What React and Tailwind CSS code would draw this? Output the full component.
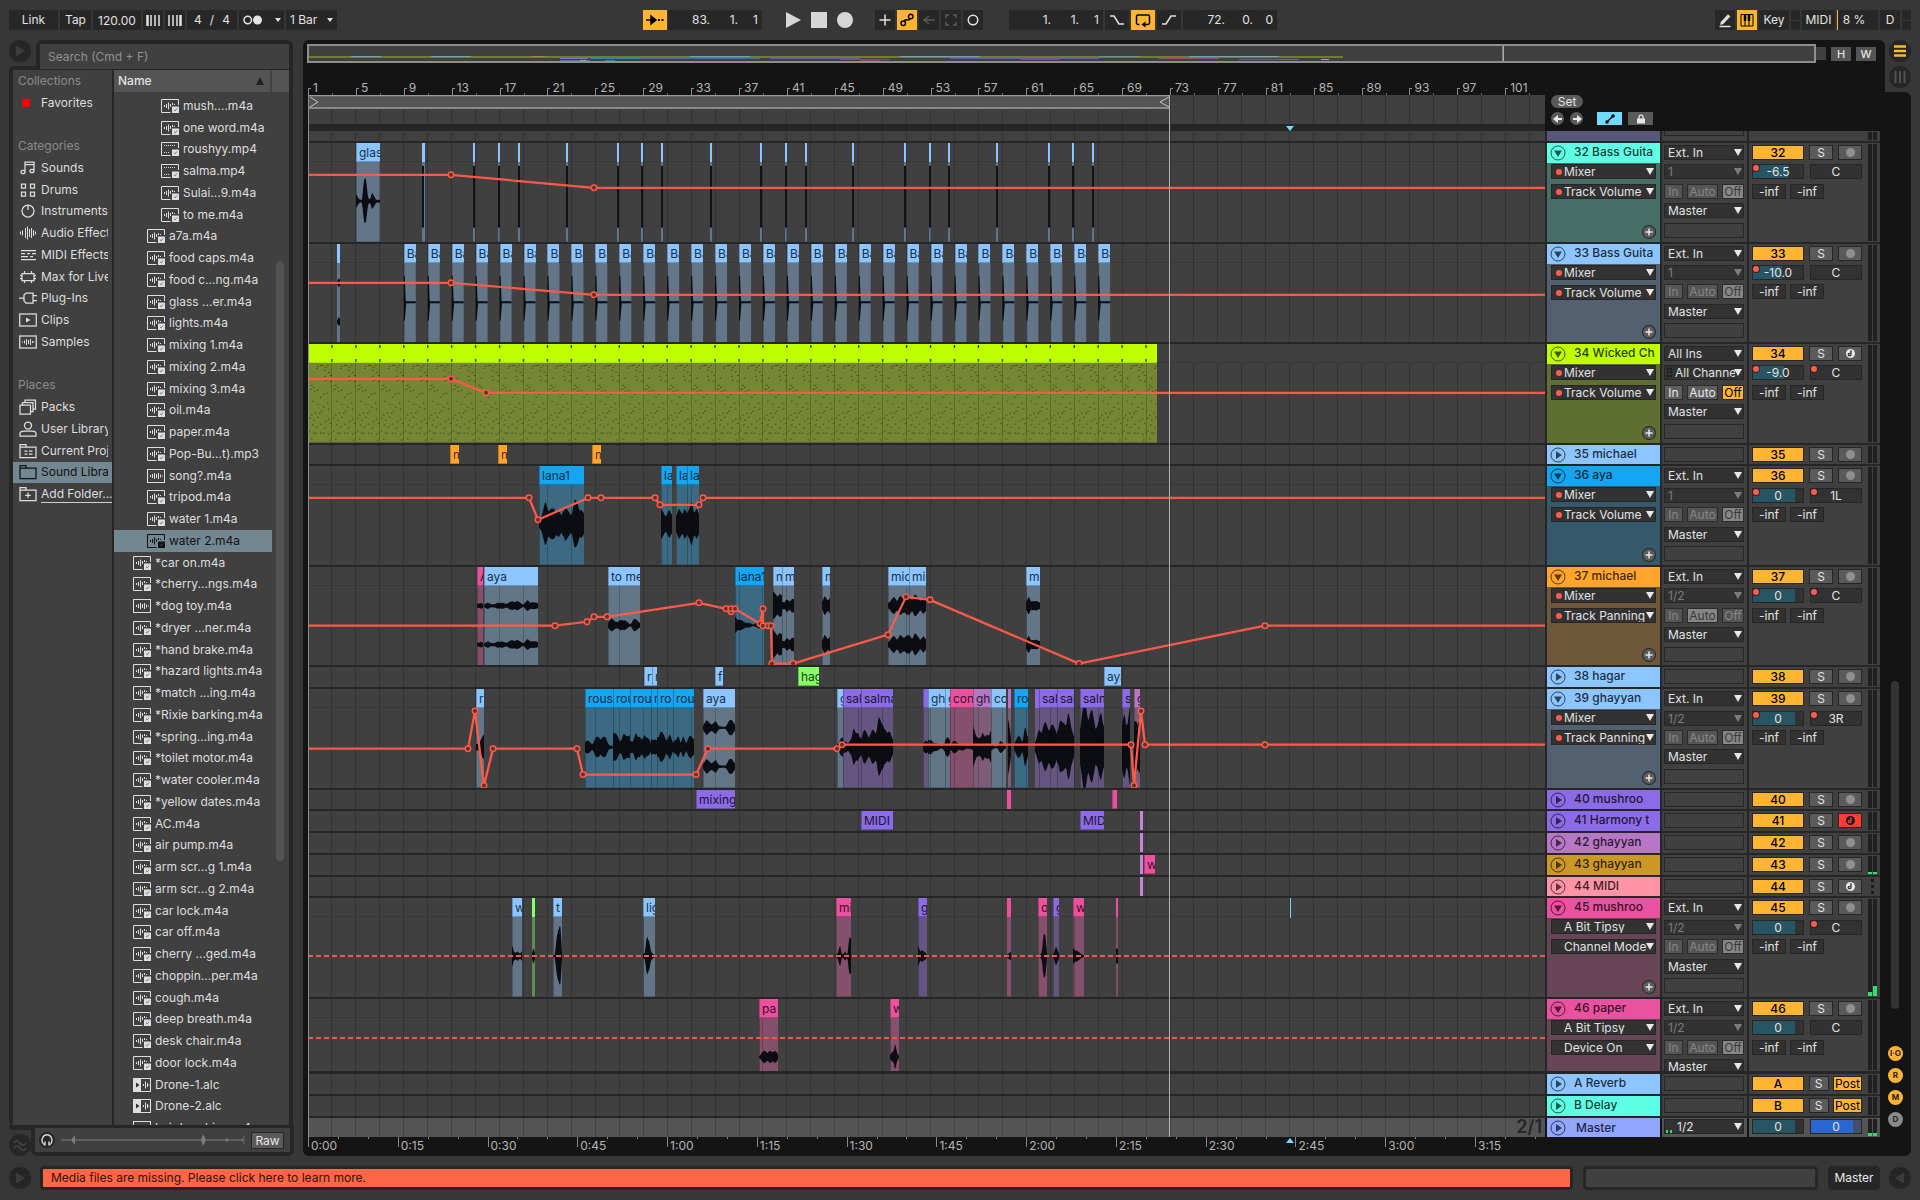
import React from "react";

/* ---------- timeline geometry ---------- */
const X0 = 308;
const W = 1237;
const BAR = 862 / 72;
const pct = (x) => `${((x - X0) / W) * 100}%`;
const pctW = (w) => `${(w / W) * 100}%`;
const barX = (bar) => X0 + (bar - 1) * BAR;

const TONES = {
  sky: { head: "bg-[#8cc5ff]", body: "#637688", ink: "text-[#16324a]" },
  blue: { head: "bg-[#14a5f3]", body: "#3c6a82", ink: "text-[#062c44]" },
  pink: { head: "bg-[#ea52a0]", body: "#84506b", ink: "text-[#3c0d26]" },
  purple: { head: "bg-[#8b6ce6]", body: "#645680", ink: "text-[#1c1238]" },
  violet: { head: "bg-[#b677c6]", body: "#7d5c78", ink: "text-[#311636]" },
  plum: { head: "bg-[#c784dc]", body: "#7d5c78", ink: "text-[#311636]" },
  green: { head: "bg-[#87ff67]", body: "#5e8c52", ink: "text-[#173f0c]" },
  orange: { head: "bg-[#ffa52c]", body: "#86683a", ink: "text-[#4a2c00]" },
};

const thin32 = [422, 473, 498, 518, 566, 617, 641, 661, 710, 760, 785, 805, 852, 904, 929, 948, 996, 1048, 1072, 1092];

const clip = (tone, x0, x1, name = "", waves = []) => ({ tone, x0, x1, name, waves });
const mono = (...a) => [{ cy: 58.5, a }];
const dual = (...a) => [{ cy: 39, a }, { cy: 78, a }];
const marks = (...points) => points;

const clips32 = [
  clip("sky", 356, 380, "glass", mono(7, 3, 1.5, 2, 21, 20, 4, 2, 8, 5, 2, 1.5, 1.5)),
  ...thin32.map((x, i) => ({ ...clip("sky", x, x + (i === 0 ? 3 : 2)), sliver: true })),
];
const clips33 = [
  clip("sky", 337, 340, "", [{ cy: 39, a: [2, 5, 3] }, { cy: 78, a: [2, 5, 3] }]),
  ...Array.from({ length: 30 }, (_, i) => ({
    ...clip("sky", barX(9 + i * 2), barX(9 + i * 2) + 12, "Ba"),
    pluck: true,
  })),
];

const TRACKS = [
  {
    n: "32", title: "32 Bass Guita", tall: true, head: "bg-[#5fffe6]", body: "bg-[#476f68]",
    sel: ["Mixer", "Track Volume"], dot: true, io: ["Ext. In", "1"], off: 2, vol: "-6.5", fill: 70, volDot: true, pan: "C",
    clips: clips32, auto: [[308, 32], [451, 32, 1], [594, 45, 1], [1545, 45]],
  },
  {
    n: "33", title: "33 Bass Guita", tall: true, head: "bg-[#8cc5ff]", body: "bg-[#53606f]",
    sel: ["Mixer", "Track Volume"], dot: true, io: ["Ext. In", "1"], off: 2, vol: "-10.0", fill: 58, volDot: true, pan: "C",
    clips: clips33, auto: [[308, 39], [451, 39, 1], [594, 51, 1], [1545, 51]],
  },
  {
    n: "34", title: "34 Wicked Ch", tall: true, head: "bg-[#c0ff00]", body: "bg-[#5f6e31]",
    sel: ["Mixer", "Track Volume"], dot: true, io: ["All Ins", "All Channels"], off: 2, live: true, midi: true, vol: "-9.0", fill: 62, volDot: true, pan: "C", panDot: true,
    clips: [], chords: true, auto: [[308, 35], [451, 35, 1], [486, 49, 1], [1545, 49]],
  },
  {
    n: "35", title: "35 michael", head: "bg-[#8cc5ff]",
    clips: [clip("orange", 450, 459, "m"), clip("orange", 498, 507, "m"), clip("orange", 592, 601, "m")],
  },
  {
    n: "36", title: "36 aya", tall: true, head: "bg-[#14a5f3]", body: "bg-[#35586a]",
    sel: ["Mixer", "Track Volume"], dot: true, io: ["Ext. In", "1"], off: 2, vol: "0", fill: 84, volDot: true, pan: "1L", panDot: true,
    clips: [
      clip("blue", 539, 584, "lana1", mono(4, 10, 21, 16, 14, 15, 13, 8, 20, 12, 10, 23, 20, 16, 9)),
      clip("blue", 661, 672, "lana", mono(14, 12, 9, 13, 10)),
      clip("blue", 676, 687, "lana", mono(8, 14, 12, 16, 10)),
      clip("blue", 687, 699, "lana", mono(12, 14, 22, 14, 15, 9)),
    ],
    auto: marks([308, 32], [529, 32, 1], [538, 54, 1], [588, 32, 1], [601, 32, 1], [655, 32, 1], [660, 39, 1], [699, 39, 1], [703, 32, 1], [1545, 32]),
  },
  {
    n: "37", title: "37 michael", tall: true, head: "bg-[#ffa52c]", body: "bg-[#6f583a]",
    sel: ["Mixer", "Track Panning"], dot: true, io: ["Ext. In", "1/2"], off: 1, vol: "0", fill: 84, volDot: true, pan: "C", panDot: true,
    clips: [
      clip("pink", 477, 483, "A", dual(2, 3, 2)),
      clip("sky", 484, 538, "aya", dual(1.5, 3, 2, 1.5, 3.5, 3, 2, 3.5, 4, 5, 3, 1.5, 5, 4, 3, 3)),
      clip("sky", 608, 640, "to me", mono(3, 6, 5, 3, 5, 6, 3, 1, 6, 5, 3)),
      clip("blue", 735, 764, "lana1", mono(8, 6, 4, 3, 2, 1, 2, 4, 3)),
      clip("sky", 773, 782, "m", dual(13, 11, 12, 9)),
      clip("sky", 782, 794, "mi", dual(5, 3, 6, 5, 7, 6)),
      clip("sky", 822, 830, "m", dual(4, 9, 6, 9)),
      clip("sky", 888, 909, "mich", dual(3, 6, 8, 6, 9, 7, 10, 8)),
      clip("sky", 909, 926, "mi", dual(9, 7, 11, 8, 6, 8, 5)),
      clip("sky", 1026, 1040, "mi", dual(3, 9, 5, 4, 5, 4)),
    ],
    auto: marks(
      [308, 59], [555, 59, 1], [587, 55, 1], [594, 50, 1], [607, 50, 1], [699, 36, 1], [726, 42, 1], [731, 45, 1], [731, 42, 1], [735, 42, 1],
      [760, 57, 1], [763, 42, 1], [763, 59, 1], [768, 59, 1], [771, 59, 1], [772, 97, 1], [793, 97, 1], [888, 68, 1], [906, 30, 1], [930, 33, 1], [1079, 97, 1], [1265, 59, 1], [1545, 59],
    ),
  },
  {
    n: "38", title: "38 hagar", head: "bg-[#8cc5ff]",
    clips: [clip("sky", 644, 652, "r"), clip("sky", 652, 657, "r"), clip("sky", 715, 723, "f"), clip("green", 798, 819, "hagar"), clip("sky", 1104, 1121, "aya")],
  },
  {
    n: "39", title: "39 ghayyan", tall: true, head: "bg-[#8cc5ff]", body: "bg-[#53606f]",
    sel: ["Mixer", "Track Panning"], dot: true, io: ["Ext. In", "1/2"], off: 2, vol: "0", fill: 84, volDot: true, pan: "3R", panDot: true,
    clips: [
      clip("sky", 476, 484, "r", mono(3, 4, 8, 12)),
      clip("blue", 585, 613, "rous", mono(7, 6, 3, 9, 10, 10, 9, 2, 1)),
      clip("blue", 613, 630, "rou", mono(18, 12, 6, 13, 10, 15)),
      clip("blue", 630, 651, "rou", mono(8, 5, 14, 12, 6, 14, 9, 4)),
      clip("blue", 651, 657, "r", mono(8, 9, 6)),
      clip("blue", 657, 673, "ro", mono(10, 16, 12, 8, 12, 4)),
      clip("blue", 673, 694, "rou", mono(4, 9, 11, 3, 14, 3, 9, 14, 7)),
      clip("sky", 703, 735, "aya", dual(3, 7, 5, 4, 6, 2, 1, 1, 7, 7, 4)),
      clip("sky", 837, 843, "g", mono(2, 8, 9)),
      clip("purple", 843, 861, "salm", mono(8, 6, 3, 8, 20, 12, 15, 10)),
      clip("purple", 861, 893, "salma", mono(9, 16, 14, 12, 16, 15, 30, 22, 24, 13, 15, 10)),
      clip("purple", 923, 928, "", mono(4, 6, 5)),
      clip("sky", 928, 945, "gha", mono(9, 7, 4, 5, 2, 1, 6)),
      clip("sky", 945, 950, "g", mono(9, 10, 6)),
      clip("pink", 950, 973, "cong", mono(3, 6, 5, 3, 3, 2, 1.5, 3)),
      clip("violet", 973, 991, "gha", mono(27, 10, 8, 16, 9, 14, 16)),
      clip("sky", 991, 1006, "con", mono(4, 1, 1, 6, 4, 1)),
      clip("violet", 1008, 1011, "", mono(30, 8)),
      clip("blue", 1014, 1028, "rou", mono(2, 8, 14, 4, 20, 12)),
      clip("purple", 1035, 1039, "", mono(6, 16)),
      clip("purple", 1039, 1057, "salm", mono(16, 19, 23, 20, 22, 19, 17)),
      clip("purple", 1057, 1074, "salm", mono(19, 26, 22, 26, 34, 18, 14)),
      clip("purple", 1080, 1104, "salma", mono(22, 38, 40, 32, 34, 24, 22, 33, 26)),
      clip("purple", 1122, 1130, "s", mono(20, 34, 24, 36)),
      clip("violet", 1134, 1140, "g", mono(22, 30, 26)),
    ],
    auto: marks(
      [308, 60], [468, 60, 1], [475, 22, 1], [484, 97, 1], [493, 60, 1], [577, 60, 1], [583, 86, 1], [696, 86, 1], [708, 60, 1], [837, 60, 1], [842, 56, 1],
      [1131, 56, 1], [1134, 97, 1], [1141, 22, 1], [1145, 56, 1], [1265, 56, 1], [1545, 56],
    ),
  },
  { n: "40", title: "40 mushroo", head: "bg-[#8b6ce6]", clips: [clip("purple", 696, 735, "mixing"), clip("pink", 1007, 1011), clip("pink", 1112, 1117)] },
  { n: "41", title: "41 Harmony t", head: "bg-[#8b6ce6]", midi: true, armed: true, clips: [clip("purple", 861, 893, "MIDI"), clip("purple", 1080, 1104, "MIDI"), clip("plum", 1140, 1143)] },
  { n: "42", title: "42 ghayyan", head: "bg-[#b677c6]", clips: [clip("plum", 1140, 1143)] },
  { n: "43", title: "43 ghayyan", head: "bg-[#cc9927]", level: [2, 2], clips: [clip("plum", 1140, 1143), clip("pink", 1144, 1155, "w")] },
  { n: "44", title: "44 MIDI", head: "bg-[#ff94a6]", midi: true, clips: [clip("plum", 1140, 1143)] },
  {
    n: "45", title: "45 mushroo", tall: true, head: "bg-[#ea52a0]", body: "bg-[#684556]",
    sel: ["A Bit Tipsy", "Channel Mode"], io: ["Ext. In", "1/2"], off: 2, vol: "0", fill: 84, pan: "C", panDot: true, level: [4, 10], dashed: 58, cursor: true,
    clips: [
      clip("sky", 512, 522, "w", mono(14, 4, 3, 5, 3, 5)),
      clip("green", 532, 535, "", mono(3, 8, 4)),
      clip("sky", 553, 562, "t", mono(1, 1, 18, 34, 32, 4)),
      clip("sky", 643, 655, "light", mono(2, 3, 21, 19, 4, 2, 1)),
      clip("pink", 836, 851, "mi", mono(1, 3, 14, 2, 2, 5, 1, 18, 16)),
      clip("purple", 918, 927, "g", mono(11, 4, 6, 5, 1)),
      clip("pink", 1007, 1011, "", mono(2, 4)),
      clip("pink", 1038, 1047, "o", mono(1, 1, 4, 22, 20, 3)),
      clip("purple", 1053, 1059, "g", mono(1, 9, 3)),
      clip("pink", 1073, 1084, "w", mono(8, 7, 4, 2, 1)),
      clip("pink", 1116, 1118, "", mono(7)),
    ],
  },
];

const TRACK46 = {
  n: "46", title: "46 paper", tall: true, last: true, head: "bg-[#ea52a0]", body: "bg-[#684556]",
  sel: ["A Bit Tipsy", "Device On"], io: ["Ext. In", "1/2"], off: 2, vol: "0", fill: 84, pan: "C", dashed: 39,
  clips: [
    clip("pink", 759, 778, "pa", [{ cy: 58, a: [1, 4, 6, 5, 6, 4, 8, 2] }]),
    clip("pink", 890, 899, "w", [{ cy: 58, a: [2, 4, 5, 16, 4, 1] }]),
  ],
};

/* ---------- drawing helpers ---------- */
function wavePoints(x0, x1, cy, a) {
  const n = Math.max(4, Math.round((x1 - x0) * 1.2));
  const up = [];
  const down = [];
  for (let i = 0; i <= n; i++) {
    const t = (i / n) * (a.length - 1);
    const k = Math.min(a.length - 1, Math.floor(t));
    const next = a[Math.min(a.length - 1, k + 1)];
    const base = a[k] + (next - a[k]) * (t - k);
    const jitter = 0.76 + 0.36 * Math.abs(Math.sin(i * 12.9 + x0 * 3.7));
    const x = x0 - X0 + ((x1 - x0) * i) / n;
    up.push(`${x.toFixed(1)},${(cy - base * jitter).toFixed(1)}`);
    down.unshift(`${x.toFixed(1)},${(cy + base * jitter * 0.95).toFixed(1)}`);
  }
  return [...up, ...down].join(" ");
}

function GridLines({ className = "" }) {
  return (
    <svg aria-hidden="true" className={`absolute inset-0 h-full w-full ${className}`} shapeRendering="crispEdges">
      {Array.from({ length: 51 }, (_, i) => (
        <line key={i} x1={pct(barX(3 + i * 2))} x2={pct(barX(3 + i * 2))} y1="0" y2="100%" stroke="#000" strokeOpacity=".2" />
      ))}
    </svg>
  );
}

const CHORD_DOTS = [
  [9, 3], [12, 2], [14, 2], [19, 2], [17, 4], [8, 5], [16, 7], [20, 9], [16, 13], [22, 12], [5, 15], [17, 17], [22, 18], [3, 22], [5, 24], [2, 26], [6, 28], [9, 27], [15, 31], [18, 30], [12, 34],
  [4, 38], [19, 40], [9, 41], [15, 44], [20, 46], [13, 48], [11, 50], [3, 52], [7, 50], [1, 55], [5, 57], [9, 54], [17, 58], [20, 56], [22, 60], [4, 62], [12, 61], [8, 64], [16, 65], [1, 68], [5, 70], [7, 70], [12, 70], [15, 70], [20, 71], [23, 70], [3, 76], [21, 77],
];

function ChordClip() {
  return (
    <svg aria-hidden="true" className="absolute inset-0 h-full w-full" viewBox={`0 0 ${W} 99`} preserveAspectRatio="none">
      <defs>
        <pattern id="chord" width={BAR * 2} height="79" y="19" patternUnits="userSpaceOnUse">
          {CHORD_DOTS.map(([x, y], i) => (
            <rect key={i} x={x} y={y} width="1.500" height="1" fill="#39451a" />
          ))}
        </pattern>
      </defs>
      <rect width="849" height="19" fill="#c0ff00" />
      <rect y="19" width="849" height="80" fill="#758735" />
      <rect y="19" width="849" height="80" fill="url(#chord)" />
      {Array.from({ length: 35 }, (_, i) => (
        <g key={i} stroke="#3d4d00" strokeWidth="1.500">
          <line x1={(i + 1) * BAR * 2} x2={(i + 1) * BAR * 2} y1="1" y2="4" />
          <line x1={(i + 1) * BAR * 2} x2={(i + 1) * BAR * 2} y1="15" y2="18" />
        </g>
      ))}
    </svg>
  );
}

function Lane({ track }) {
  const { clips, auto, dashed, tall } = track;
  return (
    <div className="relative min-w-0 flex-1 overflow-hidden bg-[#404040]">
      {tall && <div className="h-[19px] border-b border-[#383838]" />}
      {track.chords && <ChordClip />}
      {tall && (
        <svg aria-hidden="true" className={`absolute inset-x-0 top-0 w-full ${track.last ? "h-[99px]" : "h-full"}`} viewBox={`0 0 ${W} 99`} preserveAspectRatio="none">
          {clips.map((c, i) => (
            <g key={i}>
              <rect x={c.x0 - X0} y="19" width={c.x1 - c.x0} height="80" fill={TONES[c.tone].body} />
              {c.x1 - c.x0 > 4 && <line x1={c.x0 - X0 + 0.5} x2={c.x0 - X0 + 0.5} y1="19" y2="99" stroke="#000" strokeOpacity=".25" />}
              {c.waves.map((w, j) => (
                <polygon key={j} points={wavePoints(c.x0, c.x1, w.cy, w.a)} fill="#0b0d12" />
              ))}
              {c.sliver && <rect x={c.x0 - X0} y="23" width="2" height="62" fill="#0f141a" />}
              {c.pluck && (
                <path transform={`translate(${c.x0 - X0} 0)`} d="M0 32h1l1 25.500h10v2H2.500L1 77H0Z" fill="#0b0d12" />
              )}
            </g>
          ))}
        </svg>
      )}
      <GridLines className={track.chords ? "top-[19px]" : ""} />
      {clips.map((c, i) => (
        <div
          key={i}
          className={`absolute top-0 h-[19px] overflow-hidden whitespace-nowrap text-xs leading-[19px] ${TONES[c.tone].head} ${TONES[c.tone].ink} ${c.x1 - c.x0 > 4 ? "border-b border-l border-black/25 pl-[2px]" : ""}`}
          style={{ left: pct(c.x0), width: pctW(c.x1 - c.x0) }}
        >
          {c.name}
        </div>
      ))}
      {auto && (
        <svg aria-hidden="true" className="absolute inset-0 h-full w-full" viewBox={`0 0 ${W} 99`} preserveAspectRatio="none" fill="none" stroke="#ff5a49">
          <polyline points={auto.map(([x, y]) => `${x - X0},${y}`).join(" ")} strokeWidth="2.250" />
          {auto.filter((p) => p[2]).map(([x, y], i) => (
            <circle key={i} cx={x - X0} cy={y} r="2.750" strokeWidth="1.500" fill="#5a3430" />
          ))}
        </svg>
      )}
      {dashed && (
        <svg aria-hidden="true" className="absolute inset-0 h-full w-full">
          <line x1="0" x2="100%" y1={dashed} y2={dashed} stroke="#f2574a" strokeWidth="2" strokeDasharray="5 3" />
        </svg>
      )}
      {track.cursor && <div className="absolute top-0 h-5 w-px bg-[#7fd4ff]" style={{ left: pct(1290) }} />}
    </div>
  );
}

/* ---------- small controls ---------- */
function Drop({ value, label, dim = false, dot = false, indent = "pl-[3px]", meter = false }) {
  return (
    <div className="relative h-[15px] w-full border border-[#262626] bg-[#323232]">
      {dot && <span className="absolute left-1 top-1 h-[6px] w-[6px] rounded-full bg-[#ff5c4c]" />}
      {meter && <span className="absolute left-0.5 top-0.5 h-[9px] w-[5px] border-x-2 border-dotted border-[#1c1c1c]" />}
      <select aria-label={label} defaultValue={value} className={`block h-[13px] w-full appearance-none overflow-hidden bg-transparent pr-2 leading-[13px] outline-none ${indent} ${dim ? "text-[#7c7c7c]" : "text-[#e2e2e2]"}`}>
        <option>{value}</option>
      </select>
      <svg aria-hidden="true" viewBox="0 0 8 7" className={`pointer-events-none absolute right-px top-[3px] h-[7px] w-2 ${dim ? "text-[#7c7c7c]" : "text-[#e8e8e8]"}`}>
        <path d="M0 0h8L4 7Z" fill="currentColor" />
      </svg>
    </div>
  );
}

function Value({ value, label, fill, dot, tone = "bg-[#275563]", base = "bg-[#323232]" }) {
  return (
    <div className={`relative h-[15px] w-[52px] border border-[#262626] ${base}`}>
      {fill && <span className={`absolute inset-y-0 left-0 ${tone}`} style={{ width: `${fill}%` }} />}
      <input aria-label={label} defaultValue={value} className="relative block h-[13px] w-full bg-transparent text-center leading-[13px] text-[#e2e2e2] outline-none" />
      {dot && <span className="absolute left-0 top-0 h-[6px] w-[6px] rounded-full bg-[#ff5c4c] ring-1 ring-[#262626]" />}
    </div>
  );
}

function Fold({ open }) {
  return (
    <svg aria-hidden="true" viewBox="0 0 16 16" className="h-4 w-4 shrink-0">
      <circle cx="8" cy="8" r="7" fill="none" stroke="#000" strokeOpacity=".65" />
      <path d={open ? "M4 5.500h8L8 12Z" : "M6 4v8l6-4Z"} fill="#000" fillOpacity=".65" />
    </svg>
  );
}

function Meter({ level, beads = false }) {
  if (beads) return <div aria-hidden="true" className="absolute inset-y-0.5 right-1.5 border-l-[3px] border-dotted border-[#1c1c1c]" />;
  return (
    <div aria-hidden="true" className="absolute inset-y-px right-[3px] flex gap-px">
      {[0, 1].map((i) => (
        <div key={i} className="flex w-1 flex-col justify-end bg-[#202020]">
          {level && <div className="bg-[#2fe070]" style={{ height: level[i] }} />}
        </div>
      ))}
    </div>
  );
}

function RecordButton({ midi, armed, n }) {
  return (
    <button aria-label={`Arm ${n}`} className={`grid h-[15px] w-6 place-items-center border border-[#262626] ${armed ? "bg-[#ff3d30]" : "bg-[#5a5a5a]"}`}>
      <svg aria-hidden="true" viewBox="0 0 10 10" className="h-[9px] w-[9px]">
        <circle cx="5" cy="5" r="5" fill={armed ? "#1a1a1a" : midi ? "#e8e8e8" : "#8f8f8f"} />
        {midi && <path d="M5.500 1.500V6a1.500 1.250 0 1 1-1-1" fill="none" stroke={armed ? "#ff3d30" : "#333"} strokeWidth="1.500" />}
      </svg>
    </button>
  );
}

function TrackHead({ track }) {
  const { tall, sel, head, body, title, dot, last } = track;
  return (
    <div className={`relative w-[113px] shrink-0 overflow-hidden ${body || ""}`}>
      <button aria-label={`Fold ${title}`} className={`flex h-5 w-full items-center gap-2 pl-[3px] text-left font-medium text-black/80 ${head}`}>
        <Fold open={tall} />
        <span className="h-5 truncate leading-[18px]">{title}</span>
      </button>
      {tall && (
        <div className="flex flex-col gap-[5px] px-1 pt-px">
          <Drop label={`${title} device`} value={sel[0]} dot={dot} indent="pl-3" />
          <Drop label={`${title} parameter`} value={sel[1]} dot={dot} indent="pl-3" />
        </div>
      )}
      {tall && !last && (
        <button aria-label={`Add lane to ${title}`} className="absolute bottom-1 right-[5px] grid h-3 w-3 place-items-center rounded-full bg-[#5c5c5c] ring-1 ring-[#262626]">
          <svg aria-hidden="true" viewBox="0 0 8 8" className="h-2 w-2"><path d="M4 .5v7M.5 4h7" stroke="#e8e8e8" strokeWidth="1.500" /></svg>
        </button>
      )}
    </div>
  );
}

function Monitor({ off, live, title }) {
  const widths = ["w-[19px]", "w-[31px]", "w-[22px]"];
  return (
    <div className="flex h-[15px] justify-between">
      {["In", "Auto", "Off"].map((t, i) => {
        const on = i === off;
        let tone = live ? "bg-[#5e5e5e] text-[#e8e8e8]" : "bg-[#555] text-[#868686]";
        if (on) tone = live ? "bg-[#ffb532] text-black" : "bg-[#868686] text-[#3a3a3a]";
        return (
          <button key={t} aria-label={`${title} monitor ${t}`} className={`h-[15px] border border-[#2b2b2b] text-center leading-[13px] ${widths[i]} ${tone}`}>{t}</button>
        );
      })}
    </div>
  );
}

function TrackIO({ track }) {
  return (
    <div className="w-[85px] shrink-0 overflow-hidden bg-[#404040] pl-0.5 pr-[3px] pt-0.5">
      {track.tall ? (
        <div className="grid h-[97px] grid-rows-5">
          <Drop label={`${track.title} input`} value={track.io[0]} />
          <Drop label={`${track.title} channel`} value={track.io[1]} dim={!track.live} indent={track.live ? "pl-2.5" : "pl-[3px]"} meter={track.live} />
          <Monitor off={track.off} live={track.live} title={track.title} />
          <Drop label={`${track.title} output`} value="Master" />
          <div className="h-[15px] border border-[#262626]" />
        </div>
      ) : (
        <div className="h-[15px] border border-[#262626]" />
      )}
    </div>
  );
}

function TrackMixer({ track }) {
  return (
    <div className="relative w-[131px] shrink-0 overflow-hidden bg-[#404040] pl-[3px] pt-0.5">
      <div className={`grid w-[110px] ${track.tall ? "h-[97px] grid-rows-5" : ""}`}>
        <div className="flex h-[15px] justify-between">
          <button aria-label={`Activate ${track.n}`} className="h-[15px] w-[52px] border border-[#262626] bg-[#ffb532] text-center font-medium leading-[13px] text-black">{track.n}</button>
          <button aria-label={`Solo ${track.n}`} className={`h-[15px] border border-[#262626] bg-[#5a5a5a] text-center leading-[13px] text-[#e2e2e2] ${track.post ? "w-5" : "w-6"}`}>S</button>
          {track.post ? (
            <button aria-label={`Post ${track.n}`} className="h-[15px] w-[29px] border border-[#262626] bg-[#ffb532] text-center leading-[13px] text-black">Post</button>
          ) : (
            <RecordButton midi={track.midi} armed={track.armed} n={track.n} />
          )}
        </div>
        {track.tall && (
          <>
            <div className="flex h-[15px] justify-between">
              <Value label={`${track.n} volume`} value={track.vol} fill={track.fill} dot={track.volDot} />
              <Value label={`${track.n} pan`} value={track.pan} dot={track.panDot} />
            </div>
            <div className="flex h-[15px] gap-1">
              {["A", "B"].map((s) => (
                <div key={s} className="w-[34px] border border-[#262626] bg-[#323232]">
                  <input aria-label={`${track.n} send ${s}`} defaultValue="-inf" className="block h-[13px] w-full bg-transparent text-center leading-[13px] text-[#e2e2e2] outline-none" />
                </div>
              ))}
            </div>
          </>
        )}
      </div>
      <Meter level={track.level} beads={track.n === "44"} />
    </div>
  );
}

function TrackRow({ track, className = "" }) {
  return (
    <div className={`flex min-h-0 gap-0.5 overflow-hidden border-b-2 border-[#262626] bg-[#262626] ${className}`}>
      <Lane track={track} />
      <TrackHead track={track} />
      <TrackIO track={track} />
      <TrackMixer track={track} />
    </div>
  );
}

/* ---------- browser ---------- */
function FileIcon({ kind }) {
  if (kind === "alc")
    return (
      <svg aria-hidden="true" viewBox="0 0 18 14" className="h-[14px] w-[18px] shrink-0">
        <rect x=".5" y=".5" width="17" height="13" fill="none" stroke="currentColor" />
        <path d="M0 0h8v14H0Z" fill="currentColor" /><path d="M3 4.500v5L6.500 7Z" fill="#333" />
        <path d="M10.500 6v2M12.500 3.500v7M14.500 5v4M16 6.500v1" stroke="currentColor" />
      </svg>
    );
  if (kind === "sample")
    return (
      <svg aria-hidden="true" viewBox="0 0 18 14" className="h-[14px] w-[18px] shrink-0" fill="none" stroke="currentColor">
        <rect x=".5" y=".5" width="17" height="13" />
        <path d="M3.500 6v2M5.500 5v4M7.500 4v6M9.500 5v4M11.500 4v6M13.500 5.500v3M15.500 6.500v1" />
      </svg>
    );
  return (
    <svg aria-hidden="true" viewBox="0 0 18 14" className="h-[14px] w-[18px] shrink-0" fill="none" stroke="currentColor">
      <path d="M9.500 13.500H.5V.5h17V6" />
      {kind === "video" ? (
        <path d="M3 3.500h12M3 10.500h6" strokeDasharray="1 1" />
      ) : (
        <path d="M3.500 6v2M5.500 5v4M7.500 3.500v7M9.500 5v3M11.500 4v2M13.500 5v1" />
      )}
      <rect x="11" y="7.500" width="7" height="6.500" fill="currentColor" stroke="none" />
      <path d="M13 10.800l1.200 1 1.800-2.300" stroke="#555" strokeWidth=".75" />
    </svg>
  );
}

const FILES = [
  ["mush....m4a", 2], ["one word.m4a", 2], ["roushyy.mp4", 2, "video"], ["salma.mp4", 2, "video"], ["Sulai...9.m4a", 2], ["to me.m4a", 2],
  ["a7a.m4a", 1], ["food caps.m4a", 1], ["food c...ng.m4a", 1], ["glass ...er.m4a", 1], ["lights.m4a", 1], ["mixing 1.m4a", 1], ["mixing 2.m4a", 1], ["mixing 3.m4a", 1],
  ["oil.m4a", 1], ["paper.m4a", 1], ["Pop-Bu...t).mp3", 1], ["song?.m4a", 1, "sample"], ["tripod.m4a", 1], ["water 1.m4a", 1], ["water 2.m4a", 1, "audio", true],
  ["*car on.m4a", 0], ["*cherry...ngs.m4a", 0], ["*dog toy.m4a", 0, "sample"], ["*dryer ...ner.m4a", 0], ["*hand brake.m4a", 0], ["*hazard lights.m4a", 0], ["*match ...ing.m4a", 0],
  ["*Rixie barking.m4a", 0], ["*spring...ing.m4a", 0], ["*toilet motor.m4a", 0], ["*water cooler.m4a", 0], ["*yellow dates.m4a", 0], ["AC.m4a", 0], ["air pump.m4a", 0],
  ["arm scr...g 1.m4a", 0], ["arm scr...g 2.m4a", 0], ["car lock.m4a", 0], ["car off.m4a", 0], ["cherry ...ged.m4a", 0], ["choppin...per.m4a", 0], ["cough.m4a", 0],
  ["deep breath.m4a", 0], ["desk chair.m4a", 0], ["door lock.m4a", 0], ["Drone-1.alc", 0, "alc"], ["Drone-2.alc", 0, "alc"], ["hair brushing.m4a", 0, "sample"],
];
const INDENT = ["pl-[19px]", "pl-[33px]", "pl-[47px]"];

const SIDE_ICONS = {
  fav: <rect x="3" y="4" width="8" height="8" fill="#f00" stroke="none" />,
  sounds: <path d="M6 12.500V2h9v9M6 4.500h9M6 12a2 1.700 0 1 1-4 0 2 1.700 0 0 1 4 0ZM15 11a2 1.700 0 1 1-4 0 2 1.700 0 0 1 4 0Z" />,
  drums: <path d="M2.500 2h4v4h-4ZM11.500 2h4v4h-4ZM2.500 10h4v4h-4ZM11.500 10h4v4h-4Z" />,
  inst: <path d="M15 8A6 6 0 1 1 3 8a6 6 0 0 1 12 0ZM9 2v5" />,
  audio: <path strokeWidth="1" d="M1.500 6.500v3M3.500 5.500v5M6.500 3v10M8.500 1.500v13M10.500 4v8M12.500 3v10M14.500 5v6M16.500 6.500v3" />,
  midi: <path d="M2 3.500h15M2 6.500h4M8 6.500h3M13 6.500h4M2 9.500h7M11 9.500h3M2 12.500h15" />,
  max: <path d="M3 4.500h12v7H3ZM1 6.500h2M1 9.500h2M15 6.500h2M15 9.500h2M5.500 4.500V2M12.500 4.500V2M5.500 14v-2.500M12.500 14v-2.500" />,
  plug: <path d="M0 8h5M5 5l2-2h7v10H7L5 11ZM14 5.500h4M14 10.500h4" />,
  clips: <><rect x=".75" y="2" width="16.500" height="12" /><path d="M7 5.500v5L11.500 8Z" fill="currentColor" stroke="none" /></>,
  samples: <><rect x=".75" y="2" width="16.500" height="12" /><path strokeWidth="1" d="M3.500 7.500v1M5.500 6.500v3M7.500 5v6M9.500 6v4M11.500 5v6M13.500 7v2M15 7.500v1" /></>,
  packs: <path d="M1 6h10.500v9H1ZM3.500 6V3.500H14v9h-2.500M6 3.500V1h10.500v9H14" />,
  user: <path d="M12.500 4.500a3.500 3.500 0 1 1-7 0 3.500 3.500 0 0 1 7 0ZM1 15v-2.500C1 10.500 3 10 5 10h8c2 0 4 .5 4 2.500V15Z" />,
  project: <path d="M1 14.500v-13h6v2.500h10v10.500ZM1 4h6M5.500 8h3M10 8h3.500M5.500 11h3M10 11h3.500" />,
  folder: <path d="M1 14.500v-13h6v2.500h10v10.500ZM1 4h6" />,
  add: <path d="M1 14.500v-13h6v2.500h10v10.500ZM1 4h6M9 6.500v5.500M6.250 9.250h5.500" />,
};
const SIDEBAR = [
  ["title", "Collections"], ["fav", "Favorites"], null, ["title", "Categories"], ["sounds", "Sounds"], ["drums", "Drums"], ["inst", "Instruments"], ["audio", "Audio Effects"], ["midi", "MIDI Effects"],
  ["max", "Max for Live"], ["plug", "Plug-Ins"], ["clips", "Clips"], ["samples", "Samples"], null, ["title", "Places"], ["packs", "Packs"], ["user", "User Library"], ["project", "Current Project"],
  ["folder", "Sound Library"], ["add", "Add Folder..."],
];

function Sidebar() {
  return (
    <nav className="w-[99px] shrink-0 bg-[#404040]">
      <div className="grid h-[435px] auto-rows-fr">
        {SIDEBAR.map((row, i) => {
          if (!row) return <span key={i} />;
          const [icon, label] = row;
          if (icon === "title") return <h2 key={i} className="self-center pl-[5px] text-[#8a8a8a]">{label}</h2>;
          const active = icon === "folder";
          return (
            <button key={i} className={`flex items-center gap-1 overflow-hidden whitespace-nowrap pl-[6px] text-left ${icon === "add" ? "" : "pr-1"} ${active ? "bg-[#738791] text-[#111]" : "text-[#dedede]"}`}>
              <svg aria-hidden="true" viewBox="0 0 18 16" className="h-4 w-[18px] shrink-0" fill="none" stroke="currentColor" strokeWidth="1.250">{SIDE_ICONS[icon]}</svg>
              <span className={`min-w-0 flex-1 overflow-hidden ${icon === "add" ? "border-b border-[#cfcfcf]" : ""}`}>{label}</span>
            </button>
          );
        })}
      </div>
    </nav>
  );
}

function RoundButton({ label, children }) {
  return (
    <button aria-label={label} className="grid h-[22px] w-[22px] shrink-0 place-items-center rounded-full bg-[#262626]">
      <svg aria-hidden="true" viewBox="0 0 22 22" className="h-[22px] w-[22px]">{children}</svg>
    </button>
  );
}

function Browser() {
  return (
    <aside className="flex w-[284px] shrink-0 flex-col">
      <div className="flex">
        <div className="flex w-[27px] flex-col justify-between">
          <RoundButton label="Toggle browser"><path d="M7 5.500v11l9-5.500Z" fill="#3c3c3c" /></RoundButton>
          <div className="h-1 rounded-tl bg-[#262626]" />
        </div>
        <div className="flex-1 rounded-t-md bg-[#262626] px-1 pb-px pt-1">
          <input aria-label="Search" placeholder="Search (Cmd + F)" className="block h-[25px] w-full bg-[#404040] px-2 placeholder:text-[#909090]" />
        </div>
      </div>
      <div className="flex min-h-0 flex-1 gap-0.5 rounded-bl bg-[#262626] px-1">
        <Sidebar />
        <div className="flex min-w-0 flex-1 flex-col bg-[#404040]">
          <div className="flex h-[22px] shrink-0 gap-0.5">
            <button className="flex flex-1 items-center justify-between bg-[#545454] pl-1 pr-1.5 font-medium text-[#e2e2e2]">
              Name
              <svg aria-hidden="true" viewBox="0 0 8 8" className="h-2 w-2"><path d="M4 0l4 8H0Z" fill="#222" /></svg>
            </button>
            <div className="w-[17px] bg-[#545454]" />
          </div>
          <div className="flex min-h-0 flex-1 overflow-hidden">
            <ul className="mt-[3px] grid h-[1044px] flex-1 auto-rows-fr">
              {FILES.map(([name, level, kind, on]) => (
                <li key={name} className="flex">
                  <button className={`flex flex-1 items-center gap-1 whitespace-nowrap ${INDENT[level]} ${on ? "bg-[#738791] text-[#111]" : "text-[#dedede]"}`}>
                    <FileIcon kind={kind} />
                    {name}
                  </button>
                </li>
              ))}
            </ul>
            <div className="w-[17px] bg-[#404040] px-1 pt-[169px]">
              <div className="h-[600px] w-2 rounded-full bg-[#545454]" />
            </div>
          </div>
        </div>
      </div>
      <div className="flex">
        <div className="flex w-[27px] flex-col justify-between">
          <div className="h-[5px] rounded-bl bg-[#262626]" />
          <RoundButton label="Groove pool"><path d="M5 9c2-3 4-3 6 0s4 3 6 0M5 14c2-3 4-3 6 0s4 3 6 0" fill="none" stroke="#444" strokeWidth="1.500" /></RoundButton>
        </div>
        <div className="flex-1 rounded-b-md bg-[#262626] px-1 pb-1 pt-[3px]">
          <div className="flex h-6 items-center gap-1.5 bg-[#404040] pl-1 pr-1.5">
            <button aria-label="Preview" className="grid h-4 w-4 place-items-center rounded-full bg-[#262626]">
              <svg aria-hidden="true" viewBox="0 0 14 14" className="h-[14px] w-[14px]" fill="none" stroke="#d0d0d0" strokeWidth="1.500"><path d="M4.500 12C2 10 1.500 7.500 2.500 5a4.800 4.800 0 0 1 9 0c1 2.500.5 5-2 7M5 8.500v4M9 8.500v4" /></svg>
            </button>
            <svg aria-hidden="true" viewBox="0 0 184 14" className="h-[14px] min-w-0 flex-1" fill="#7d7d7d">
              <path d="M0 6.500h184v1H0ZM10 7l4-5v10ZM140 7l2-6 3 6-3 6ZM164 7l2-2 2 2-2 2ZM180 7l4-5v1l-3 4 3 4v1Z" />
            </svg>
            <button className="h-[17px] w-[33px] border border-[#262626] bg-[#5a5a5a] leading-[15px] text-[#e8e8e8]">Raw</button>
          </div>
        </div>
      </div>
    </aside>
  );
}

/* ---------- transport ---------- */
const tb = "flex h-5 items-center justify-center bg-[#272727] text-[#e2e2e2]";

function Glyph({ children, box = "0 0 16 16", className = "h-4 w-4" }) {
  return <svg aria-hidden="true" viewBox={box} className={className} fill="none" stroke="currentColor" strokeWidth="1.500">{children}</svg>;
}

function Position({ parts, label }) {
  return (
    <div role="group" aria-label={label} className={`${tb} w-[94px] justify-end gap-2 pr-1`}>
      {parts.map((p, i) => (
        <span key={i} className={`text-right ${i === 2 ? "w-3" : "w-5"}`}>{p}</span>
      ))}
    </div>
  );
}

function Transport() {
  return (
    <header className="grid h-10 shrink-0 grid-cols-[1fr_auto_1fr] items-center">
      <div className="flex gap-0.5">
        <button className={`${tb} w-[49px]`}>Link</button>
        <button className={`${tb} w-[31px]`}>Tap</button>
        <input aria-label="Tempo" defaultValue="120.00" className="h-5 w-12 bg-[#272727] text-center text-[#e2e2e2]" />
        <button aria-label="Nudge down" className={`${tb} w-5`}><Glyph><path d="M2.500 3v11" strokeWidth="2.500" /><path d="M6 3v11M10 3v11M14 3v11" /></Glyph></button>
        <button aria-label="Nudge up" className={`${tb} w-5`}><Glyph><path d="M13.500 3v11" strokeWidth="2.500" /><path d="M2 3v11M6 3v11M10 3v11" /></Glyph></button>
        <div role="group" aria-label="Time signature" className={`${tb} w-[50px] gap-2`}><span>4</span><span>/</span><span>4</span></div>
        <button aria-label="Metronome" className={`${tb} w-[45px] gap-3`}>
          <Glyph box="0 0 20 10" className="h-[10px] w-5"><circle cx="4.750" cy="5" r="3.750" /><circle cx="14.500" cy="5" r="4.500" fill="currentColor" stroke="none" /></Glyph>
          <Glyph box="0 0 6 4" className="h-1 w-[6px]"><path d="M0 0h6L3 4Z" fill="currentColor" stroke="none" /></Glyph>
        </button>
        <div className="relative h-5 w-[51px] bg-[#272727]">
          <select aria-label="Quantization" className="h-5 w-full appearance-none bg-transparent pl-1 text-[#e2e2e2]"><option>1 Bar</option></select>
          <svg aria-hidden="true" viewBox="0 0 6 4" className="pointer-events-none absolute right-1 top-2 h-1 w-[6px]"><path d="M0 0h6L3 4Z" fill="#e2e2e2" /></svg>
        </div>
      </div>

      <div className="flex items-center">
        <div className="flex gap-px">
          <button aria-label="Follow" className="flex h-5 w-6 items-center justify-center bg-[#ffb532] text-black"><Glyph box="0 0 20 12" className="h-3 w-5"><path d="M1 6h9" /><path d="M6 2l5 4-5 4Z" fill="currentColor" /><path d="M13 6h2M16.500 6h2" strokeWidth="2" /></Glyph></button>
          <Position label="Song position" parts={["83.", "1.", "1"]} />
        </div>
        <div className="ml-6 mr-[22px] flex items-center gap-2.5">
          <button aria-label="Play"><svg aria-hidden="true" viewBox="0 0 15 16" className="h-4 w-[15px]"><path d="M0 0v16l15-8Z" fill="#d6d6d6" /></svg></button>
          <button aria-label="Stop" className="h-4 w-4 bg-[#d6d6d6]" />
          <button aria-label="Record" className="h-4 w-4 rounded-full bg-[#d6d6d6]" />
        </div>
        <div className="flex gap-0.5">
          <button aria-label="Overdub" className={`${tb} w-5`}><Glyph><path d="M8 2.500v11M2.500 8h11" /></Glyph></button>
          <button aria-label="Automation arm" className="flex h-5 w-5 items-center justify-center bg-[#ffb532] text-black"><Glyph><circle cx="4.250" cy="11.250" r="2.250" /><circle cx="11.750" cy="4.500" r="2.250" /><path d="M5.500 9.250C6 6.500 8 8.500 8.500 8s2 .5 2.500-1.500" /></Glyph></button>
          <button aria-label="Re-enable automation" className={`${tb} w-5`}><Glyph><path d="M14 8H4M8 4L3 8l5 4" stroke="#5a5a5a" /></Glyph></button>
          <button aria-label="Capture" className={`${tb} w-5`}><Glyph><path d="M3 6V3h3M10 3h3v3M13 10v3h-3M6 13H3v-3" stroke="#5a5a5a" /></Glyph></button>
          <button aria-label="Session record" className={`${tb} w-5`}><Glyph><circle cx="8" cy="8" r="4.750" /></Glyph></button>
        </div>
        <div className="ml-[26px] flex gap-0.5">
          <Position label="Loop start" parts={["1.", "1.", "1"]} />
          <button aria-label="Punch in" className={`${tb} w-6`}><Glyph><path d="M1 4h4l5 8h5" /></Glyph></button>
          <button aria-label="Loop" className="flex h-5 w-6 items-center justify-center bg-[#ffb532] text-black"><Glyph><path d="M4.500 12.500H3A1.500 1.500 0 0 1 1.500 11V4.500A1.500 1.500 0 0 1 3 3h10a1.500 1.500 0 0 1 1.500 1.500V11a1.500 1.500 0 0 1-1.500 1.500H8" /><path d="M10.500 9.500v6l-4-3Z" fill="currentColor" stroke="none" /></Glyph></button>
          <button aria-label="Punch out" className={`${tb} w-6`}><Glyph><path d="M1 12h4l5-8h5" /></Glyph></button>
          <Position label="Loop length" parts={["72.", "0.", "0"]} />
        </div>
      </div>

      <div className="flex justify-end gap-0.5">
        <button aria-label="Draw mode" className={`${tb} w-5`}><Glyph><path d="M4 10L11 2.500l2 2L6 12l-2.500.5Z" fill="currentColor" strokeWidth=".5" /><path d="M2.500 14.500h11" /></Glyph></button>
        <button aria-label="Computer keyboard" className="flex h-5 w-5 items-center justify-center bg-[#ffb532] text-black"><Glyph><path d="M2 2.500v11.500h12V2.500M6 9v5M10 9v5" strokeWidth="1" /><path d="M6 2.500V9M10 2.500V9" strokeWidth="2.500" /><path d="M2 2.500h12" strokeWidth="1" /></Glyph></button>
        <button className={`${tb} w-[30px]`}>Key</button>
        <div aria-hidden="true" className="flex w-[9px] flex-col gap-px"><div className="flex-1 bg-[#272727]" /><div className="flex-1 bg-[#272727]" /></div>
        <button className={`${tb} w-[33px]`}>MIDI</button>
        <div className={`${tb} w-[41px] border-l border-[#ffb532] pr-2`}>8 %</div>
        <button className={`${tb} w-5`}>D</button>
        <div aria-hidden="true" className="flex w-[9px] flex-col gap-px"><div className="flex-1 bg-[#272727]" /><div className="flex-1 bg-[#272727]" /></div>
      </div>
    </header>
  );
}

/* ---------- arrangement ---------- */
const OVERVIEW = [
  [320, 1022, 4, "#6d7f2e"], [350, 30, 3, "#6fa6a8"], [430, 40, 3, "#6fa6a8"], [530, 14, 3, "#a8864a"], [560, 28, 5, "#8b6ce6"], [590, 60, 5, "#3a7fae"], [640, 120, 5, "#3f76a6"],
  [690, 60, 3, "#6fa6a8"], [770, 90, 5, "#6759a6"], [840, 50, 6, "#8c4670"], [900, 80, 3, "#6fa6a8"], [950, 150, 5, "#6759a6"], [1020, 40, 6, "#8c4670"], [1100, 40, 3, "#5f9a84"], [1160, 60, 5, "#a04a80"],
  [1190, 90, 3, "#6fa6a8"], [1240, 60, 6, "#6759a6"], [560, 30, 7, "#4b79a3"], [580, 6, 7, "#6fcf55"], [605, 10, 7, "#4b79a3"], [860, 20, 7, "#8c4670"], [1322, 8, 6, "#c784dc"],
];

function OverviewBar() {
  return (
    <div className="flex h-[19px] items-center">
      <div className="relative h-[19px] min-w-0 flex-1 border-2 border-[#8e8e8e] bg-[#404040]">
        <svg aria-hidden="true" viewBox="308 0 1508 15" preserveAspectRatio="none" className="h-full w-full" shapeRendering="crispEdges">
          <path d="M308 11h1036" stroke="#6d7f2e" strokeWidth="2" />
          {OVERVIEW.map(([x, w, y, c], i) => (
            <rect key={i} x={x} y={y + 7} width={w} height="1" fill={c} />
          ))}
          <path d="M1504.500 0v15" stroke="#e8e8e8" />
        </svg>
      </div>
      <div className="h-[13px] w-[10px] bg-[#404040]" />
      <button className="ml-[5px] h-[14px] w-5 bg-[#545454] text-center text-[11px] font-medium leading-[14px] text-[#e2e2e2]">H</button>
      <button className="ml-[5px] mr-[9px] h-[14px] w-5 bg-[#545454] text-center text-[11px] font-medium leading-[14px] text-[#e2e2e2]">W</button>
    </div>
  );
}

function BarRuler() {
  return (
    <div className="relative h-8 overflow-hidden">
      {Array.from({ length: 26 }, (_, i) => 1 + i * 4).map((b) => (
        <div key={b} className="absolute bottom-0 h-[7px] border-l border-[#8a8a8a]" style={{ left: pct(barX(b)) }}>
          <span className="absolute -top-[7px] left-1 leading-[14px] text-[#b4b4b4]">{b}</span>
          <span className="block w-[2px] border-t border-[#8a8a8a]" />
        </div>
      ))}
      {Array.from({ length: 26 }, (_, i) => 3 + i * 4).map((b) => (
        <div key={b} className="absolute bottom-0 h-0.5 w-px bg-[#6a6a6a]" style={{ left: pct(barX(b)) }} />
      ))}
    </div>
  );
}

function TimeRuler() {
  const labels = Array.from({ length: 14 }, (_, i) => `${Math.floor(i / 4)}:${["00", "15", "30", "45"][i % 4]}`);
  const step = 1167 / 13;
  return (
    <div className="relative h-[19px]">
      {labels.map((t, i) => (
        <div key={t} className="absolute top-0 h-[10px] border-l border-[#8a8a8a] pl-0.5 leading-[18px] text-[#b4b4b4]" style={{ left: pct(X0 + i * step) }}>{t}</div>
      ))}
      {labels.flatMap((t, i) => [1, 2].map((k) => (
        <div key={t + k} className="absolute top-0 h-0.5 w-px bg-[#8a8a8a]" style={{ left: pct(X0 + (i + k / 3) * step) }} />
      )))}
      <svg aria-hidden="true" viewBox="0 0 8 5" className="absolute top-px h-[5px] w-2 -translate-x-1/2" style={{ left: pct(1290) }}><path d="M4 0l4 5H0Z" fill="#6fdcff" /></svg>
    </div>
  );
}

function Arrangement() {
  return (
    <main className="flex min-w-0 flex-1 flex-col rounded-bl-md rounded-t-md bg-[#141414] pl-1 pr-[5px] pt-1">
      <div className="-mr-[5px] shrink-0"><OverviewBar /></div>
      <div className="relative flex min-h-0 flex-1 flex-col pl-px">
        <div className="flex shrink-0 gap-0.5">
          <div className="min-w-0 flex-1">
            <BarRuler />
            <div className="relative h-[29px] bg-[#404040]">
              <GridLines />
              <svg aria-hidden="true" viewBox="0 0 862 14" preserveAspectRatio="none" className="relative block h-[14px]" style={{ width: pctW(862) }}>
                <rect width="862" height="14" fill="#555" />
                <path d="M0 .5h862M0 13h862" stroke="#999" strokeWidth="1.500" />
                <path d="M2 2l8 5-8 5M861 2l-9 5 9 5" fill="none" stroke="#c4c4c4" />
              </svg>
            </div>
            <div className="relative h-[7px] bg-[#262626]">
              <svg aria-hidden="true" viewBox="0 0 8 5" className="absolute bottom-0 h-[5px] w-2 -translate-x-1/2" style={{ left: pct(1290) }}><path d="M0 0h8L4 5Z" fill="#6fdcff" /></svg>
            </div>
          </div>
          <div className="w-[333px] shrink-0 pl-1 pt-8">
            <button className="block h-[13px] w-8 rounded-full bg-[#5a5a5a] text-center leading-[13px] text-[#e2e2e2]">Set</button>
            <div className="mt-1 flex h-[13px] items-center">
              {["Previous locator", "Next locator"].map((l, i) => (
                <button key={l} aria-label={l} className="mr-1.5 grid h-[13px] w-[13px] place-items-center rounded-full bg-[#5a5a5a]">
                  <svg aria-hidden="true" viewBox="0 0 10 8" className="h-2 w-[10px]"><path d={i ? "M1 3h4V0l5 4-5 4V5H1Z" : "M9 3H5V0L0 4l5 4V5h4Z"} fill="#e8e8e8" /></svg>
                </button>
              ))}
              <button aria-label="Automation mode" className="ml-2 grid h-[13px] w-[25px] place-items-center bg-[#6fdcff]">
                <svg aria-hidden="true" viewBox="0 0 10 10" className="h-2.5 w-2.5"><circle cx="2" cy="8" r="1.750" /><circle cx="8" cy="2" r="1.750" /><path d="M2 8l6-6" stroke="#000" strokeWidth="1.500" /></svg>
              </button>
              <button aria-label="Lock envelopes" className="ml-1.5 grid h-[13px] w-[25px] place-items-center bg-[#5a5a5a]">
                <svg aria-hidden="true" viewBox="0 0 10 10" className="h-2.5 w-2.5"><rect x="1" y="4.500" width="8" height="5" fill="#e8e8e8" /><path d="M3 5V3a2 2 0 0 1 4 0v2" fill="none" stroke="#e8e8e8" strokeWidth="1.250" /></svg>
              </button>
            </div>
          </div>
        </div>

        <div className="flex h-3 shrink-0 gap-0.5 border-b-2 border-[#262626] bg-[#262626]">
          <div className="relative flex-1 bg-[#404040]"><GridLines /></div>
          <div className="w-[113px] bg-[#56587a]" />
          <div className="w-[85px] bg-[#404040] pl-0.5 pr-[3px]"><div className="h-[5px] border border-t-0 border-[#262626]" /></div>
          <div className="relative w-[131px] bg-[#404040]"><Meter /></div>
        </div>

        <div className="grid h-[856px] shrink-0 grid-rows-[37fr_37fr_37fr_8fr_37fr_37fr_8fr_37fr_8fr_8fr_8fr_8fr_8fr_37fr]">
          {TRACKS.map((t) => <TrackRow key={t.n} track={t} />)}
        </div>
        <div className="flex min-h-0 flex-1 flex-col bg-[#262626] pb-px">
          <TrackRow track={TRACK46} className="flex-1" />
        </div>
        <TrackRow track={{ n: "A", title: "A Reverb", head: "bg-[#8cc5ff]", post: true, clips: [] }} className="h-[22px] shrink-0" />
        <TrackRow track={{ n: "B", title: "B Delay", head: "bg-[#5fffe6]", post: true, clips: [] }} className="h-[22px] shrink-0" />
        <div className="flex h-[19px] shrink-0 gap-0.5">
          <div className="relative flex-1 bg-[#545454]">
            <GridLines />
            <span className="absolute right-[3px] top-0 text-lg font-semibold leading-[18px] text-[#262626]">2/1</span>
          </div>
          <button className="flex w-[113px] items-center gap-2.5 bg-[#92a5ff] pl-[3px] font-medium text-black/80"><Fold /><span>Master</span></button>
          <div className="relative w-[85px] bg-[#545454] pl-0.5 pr-[3px] pt-px">
            <Drop label="Master output" value="1/2" indent="pl-3" />
            <span aria-hidden="true" className="absolute bottom-1 left-1 h-[3px] w-[6px] border-x-2 border-[#2fe070]" />
          </div>
          <div className="relative w-[131px] bg-[#545454] pl-[3px] pt-px">
            <div className="flex w-[110px] justify-between">
              <Value label="Master volume" value="0" fill={84} />
              <Value label="Cue volume" value="0" fill={84} tone="bg-[#2c66cf]" base="bg-[#44506b]" />
            </div>
            <Meter level={[3, 3]} />
          </div>
        </div>
        <div className="flex shrink-0 gap-0.5">
          <div className="min-w-0 flex-1"><TimeRuler /></div>
          <div className="w-[333px]" />
        </div>
        <div className="pointer-events-none absolute bottom-[19px] left-px right-[335px] top-8 border-l border-[#8e8e8e]">
          <div className="absolute inset-y-0 w-px bg-[#b5b5b5]" style={{ left: pct(1169) }} />
        </div>
      </div>
    </main>
  );
}

function RightRail() {
  return (
    <div className="flex w-[26px] shrink-0 flex-col">
      <div className="flex h-[52px] flex-col items-end gap-1">
        <RoundButton label="Arrangement view"><path d="M5 6.500h12M5 11h12M5 15.500h12" stroke="#ffb532" strokeWidth="2.500" /></RoundButton>
        <RoundButton label="Session view"><path d="M6.500 5v12M11 5v12M15.500 5v12" stroke="#505050" strokeWidth="2" /></RoundButton>
      </div>
      <div className="flex flex-1 flex-col items-start justify-between rounded-r-md bg-[#141414] pb-[29px] pl-[3px] pt-[589px]">
        <div className="ml-[3px] h-[328px] w-2 rounded-full bg-[#333]" />
        <div className="flex flex-col gap-[7px]">
          {["I·O", "R", "M", "D"].map((t) => (
            <button key={t} className={`h-[15px] w-[15px] rounded-full text-center text-[8px] font-bold leading-[15px] text-[#222] ${t === "D" ? "bg-[#8a8a8a]" : "bg-[#ffb532]"}`}>{t}</button>
          ))}
        </div>
      </div>
    </div>
  );
}

export default function App() {
  return (
    <div className="flex h-screen min-h-[1200px] flex-col overflow-hidden bg-[#373737] px-[9px] font-[Inter,'Noto_Sans',sans-serif] text-xs text-[#dedede]">
      <Transport />
      <div className="flex min-h-0 flex-1">
        <Browser />
        <div className="ml-2.5 flex min-w-0 flex-1">
          <Arrangement />
          <RightRail />
        </div>
      </div>
      <footer className="flex h-11 shrink-0 items-center">
        <RoundButton label="Toggle info"><path d="M7 5.500v11l9-5.500Z" fill="#3c3c3c" /></RoundButton>
        <button className="ml-[9px] h-6 flex-1 rounded border-[3px] border-[#262626] bg-[#ff6647] pl-2 text-left leading-[18px] text-[#2a1410]">Media files are missing. Please click here to learn more.</button>
        <div className="ml-2.5 h-6 w-[235px] rounded border-[3px] border-[#262626] bg-[#404040]" />
        <button className="ml-2.5 h-6 w-[52px] rounded bg-[#262626] text-center text-[#e8e8e8]">Master</button>
        <div className="ml-[9px]"><RoundButton label="Toggle detail"><path d="M15 5.500v11L6 11Z" fill="#3c3c3c" /></RoundButton></div>
      </footer>
    </div>
  );
}
